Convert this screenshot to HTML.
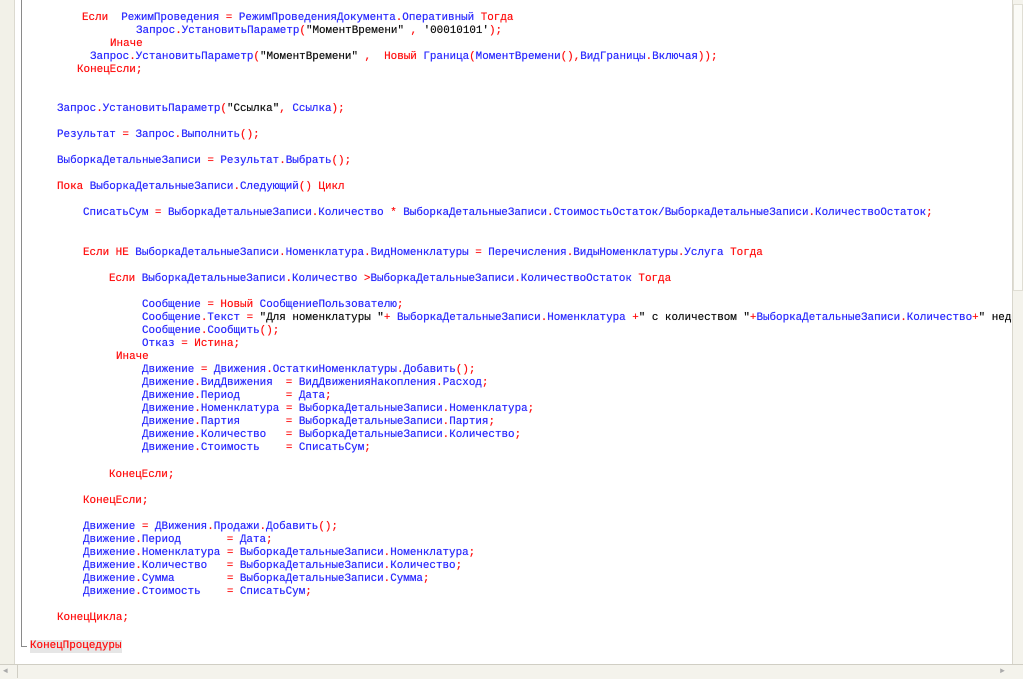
<!DOCTYPE html>
<html><head><meta charset="utf-8">
<style>
html,body{margin:0;padding:0;}
body{width:1023px;height:678px;position:relative;overflow:hidden;background:#fff;font-family:"Liberation Mono","DejaVu Sans Mono",monospace;font-size:10.9px;}
.g{position:absolute;left:0;top:0;width:14px;height:664px;background:#f2f1e8;border-right:1px solid #dcdad0;}
.vl{position:absolute;left:21px;top:0;width:1px;height:646px;background:#8a8a8a;}
.hl{position:absolute;left:21px;top:646px;width:6px;height:1px;background:#8a8a8a;}
.wrap{position:absolute;left:0;top:1px;width:1012px;height:663px;overflow:hidden;}
.l{position:absolute;white-space:pre;line-height:13px;color:#ff1010;text-shadow:0 0 0.4px currentColor;}
.b{color:#2a2aff;}
.s{color:#111;}
.sbv{position:absolute;left:1012px;top:0;width:11px;height:664px;background:#f4f3ec;border-left:1px solid #d8d6cc;}
.thumb{position:absolute;left:1013px;top:4px;width:10px;height:287px;background:#fbfbf7;border:1px solid #e0ded4;box-sizing:border-box;}
.sbh{position:absolute;left:0;top:664px;width:1023px;height:14px;background:#f4f3ec;border-top:1px solid #d0cec4;}
.cp{background:#e6e6e6;}
</style></head><body>
<div class="g"></div><div class="vl"></div><div class="hl"></div>
<div class="wrap">
<div class="l" style="left:82px;top:11px">Если  <span class="b">РежимПроведения</span> = <span class="b">РежимПроведенияДокумента</span>.<span class="b">Оперативный</span> Тогда</div>
<div class="l" style="left:136px;top:24px"><span class="b">Запрос</span>.<span class="b">УстановитьПараметр</span>(<span class="s">"МоментВремени"</span> , <span class="s">'00010101'</span>);</div>
<div class="l" style="left:110px;top:37px">Иначе</div>
<div class="l" style="left:90px;top:50px"><span class="b">Запрос</span>.<span class="b">УстановитьПараметр</span>(<span class="s">"МоментВремени"</span> ,  Новый <span class="b">Граница</span>(<span class="b">МоментВремени</span>(),<span class="b">ВидГраницы</span>.<span class="b">Включая</span>));</div>
<div class="l" style="left:77px;top:63px">КонецЕсли;</div>
<div class="l" style="left:57px;top:102px"><span class="b">Запрос</span>.<span class="b">УстановитьПараметр</span>(<span class="s">"Ссылка"</span>, <span class="b">Ссылка</span>);</div>
<div class="l" style="left:57px;top:128px"><span class="b">Результат</span> = <span class="b">Запрос</span>.<span class="b">Выполнить</span>();</div>
<div class="l" style="left:57px;top:154px"><span class="b">ВыборкаДетальныеЗаписи</span> = <span class="b">Результат</span>.<span class="b">Выбрать</span>();</div>
<div class="l" style="left:57px;top:180px">Пока <span class="b">ВыборкаДетальныеЗаписи</span>.<span class="b">Следующий</span>() Цикл</div>
<div class="l" style="left:83px;top:206px"><span class="b">СписатьСум</span> = <span class="b">ВыборкаДетальныеЗаписи</span>.<span class="b">Количество</span> * <span class="b">ВыборкаДетальныеЗаписи</span>.<span class="b">СтоимостьОстаток/ВыборкаДетальныеЗаписи</span>.<span class="b">КоличествоОстаток</span>;</div>
<div class="l" style="left:83px;top:246px">Если НЕ <span class="b">ВыборкаДетальныеЗаписи</span>.<span class="b">Номенклатура</span>.<span class="b">ВидНоменклатуры</span> = <span class="b">Перечисления</span>.<span class="b">ВидыНоменклатуры</span>.<span class="b">Услуга</span> Тогда</div>
<div class="l" style="left:109px;top:272px">Если <span class="b">ВыборкаДетальныеЗаписи</span>.<span class="b">Количество</span> &gt;<span class="b">ВыборкаДетальныеЗаписи</span>.<span class="b">КоличествоОстаток</span> Тогда</div>
<div class="l" style="left:142px;top:298px"><span class="b">Сообщение</span> = Новый <span class="b">СообщениеПользователю</span>;</div>
<div class="l" style="left:142px;top:311px"><span class="b">Сообщение</span>.<span class="b">Текст</span> = <span class="s">"Для номенклатуры "</span>+ <span class="b">ВыборкаДетальныеЗаписи</span>.<span class="b">Номенклатура</span> +<span class="s">" с количеством "</span>+<span class="b">ВыборкаДетальныеЗаписи</span>.<span class="b">Количество</span>+<span class="s">" недостаточно"</span></div>
<div class="l" style="left:142px;top:324px"><span class="b">Сообщение</span>.<span class="b">Сообщить</span>();</div>
<div class="l" style="left:142px;top:337px"><span class="b">Отказ</span> = Истина;</div>
<div class="l" style="left:116px;top:350px">Иначе</div>
<div class="l" style="left:142px;top:363px"><span class="b">Движение</span> = <span class="b">Движения</span>.<span class="b">ОстаткиНоменклатуры</span>.<span class="b">Добавить</span>();</div>
<div class="l" style="left:142px;top:376px"><span class="b">Движение</span>.<span class="b">ВидДвижения</span>  = <span class="b">ВидДвиженияНакопления</span>.<span class="b">Расход</span>;</div>
<div class="l" style="left:142px;top:389px"><span class="b">Движение</span>.<span class="b">Период</span>       = <span class="b">Дата</span>;</div>
<div class="l" style="left:142px;top:402px"><span class="b">Движение</span>.<span class="b">Номенклатура</span> = <span class="b">ВыборкаДетальныеЗаписи</span>.<span class="b">Номенклатура</span>;</div>
<div class="l" style="left:142px;top:415px"><span class="b">Движение</span>.<span class="b">Партия</span>       = <span class="b">ВыборкаДетальныеЗаписи</span>.<span class="b">Партия</span>;</div>
<div class="l" style="left:142px;top:428px"><span class="b">Движение</span>.<span class="b">Количество</span>   = <span class="b">ВыборкаДетальныеЗаписи</span>.<span class="b">Количество</span>;</div>
<div class="l" style="left:142px;top:441px"><span class="b">Движение</span>.<span class="b">Стоимость</span>    = <span class="b">СписатьСум</span>;</div>
<div class="l" style="left:109px;top:468px">КонецЕсли;</div>
<div class="l" style="left:83px;top:494px">КонецЕсли;</div>
<div class="l" style="left:83px;top:520px"><span class="b">Движение</span> = <span class="b">ДВижения</span>.<span class="b">Продажи</span>.<span class="b">Добавить</span>();</div>
<div class="l" style="left:83px;top:533px"><span class="b">Движение</span>.<span class="b">Период</span>       = <span class="b">Дата</span>;</div>
<div class="l" style="left:83px;top:546px"><span class="b">Движение</span>.<span class="b">Номенклатура</span> = <span class="b">ВыборкаДетальныеЗаписи</span>.<span class="b">Номенклатура</span>;</div>
<div class="l" style="left:83px;top:559px"><span class="b">Движение</span>.<span class="b">Количество</span>   = <span class="b">ВыборкаДетальныеЗаписи</span>.<span class="b">Количество</span>;</div>
<div class="l" style="left:83px;top:572px"><span class="b">Движение</span>.<span class="b">Сумма</span>        = <span class="b">ВыборкаДетальныеЗаписи</span>.<span class="b">Сумма</span>;</div>
<div class="l" style="left:83px;top:585px"><span class="b">Движение</span>.<span class="b">Стоимость</span>    = <span class="b">СписатьСум</span>;</div>
<div class="l" style="left:57px;top:611px">КонецЦикла;</div>
<div class="l cp" style="left:30px;top:639px">КонецПроцедуры</div>
</div>
<div class="sbv"></div><div class="thumb"></div>
<div class="sbh"></div>
<div style="position:absolute;left:3px;top:667px;font-size:8px;color:#aaa;line-height:9px">◄</div>
<div style="position:absolute;left:17px;top:665px;width:1px;height:13px;background:#d0cec4"></div>
<div style="position:absolute;left:1000px;top:667px;font-size:8px;color:#aaa;line-height:9px">►</div>
</body></html>
